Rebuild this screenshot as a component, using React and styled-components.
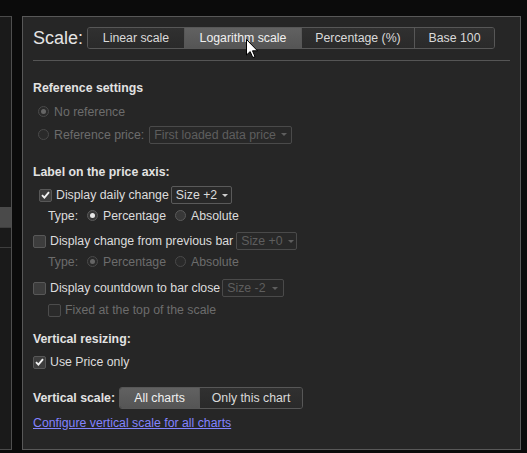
import React from 'react';
import styled, { createGlobalStyle } from 'styled-components';

const Global = createGlobalStyle`
  html, body {
    margin: 0;
    padding: 0;
    background: #0b0b0b;
    font-family: "Liberation Sans", Arial, sans-serif;
    font-size: 12.3px;
    color: #dcdcdc;
  }
`;

const Page = styled.div`
  display: flex;
  gap: 10px;
  padding-top: 16px;
  height: 453px;
  box-sizing: border-box;
  position: relative;
`;

const SideStrip = styled.div`
  width: 12px;
  height: 434px;
  box-sizing: border-box;
  background: #1a1a1a;
  border-top: 1px solid #4a4a4a;
  border-right: 1px solid #4f4f4f;
  border-bottom: 1px solid #4a4a4a;
  display: flex;
  flex-direction: column;
`;

const SideItem = styled.div`
  margin-top: 190px;
  height: 20px;
  background: #4a4a4a;
  border-bottom: 1px solid #3e3e3e;
`;

const SideLine = styled.div`
  margin-top: 19px;
  height: 1px;
  background: #3e3e3e;
`;

const Panel = styled.div`
  width: 499px;
  height: 434px;
  box-sizing: border-box;
  background: #262626;
  border: 1px solid #585858;
  padding: 10px 10px 0 10px;
  display: flex;
  flex-direction: column;
`;

const Header = styled.div`
  display: flex;
  align-items: center;
  gap: 6px;
  height: 22px;
  padding-bottom: 11px;
  border-bottom: 1px solid #555;
`;

const Title = styled.div`
  font-size: 18px;
  color: #e4e4e4;
  width: 48px;
  white-space: nowrap;
`;

const Segments = styled.div`
  display: flex;
  height: 22px;
  box-sizing: border-box;
  border: 1px solid #575757;
  border-radius: 3px;
  overflow: hidden;
`;

const Segment = styled.div`
  display: flex;
  align-items: center;
  justify-content: center;
  width: ${p => p.$w}px;
  box-sizing: border-box;
  color: ${p => (p.$active ? '#f0f0f0' : '#dadada')};
  background: ${p =>
    p.$active
      ? 'linear-gradient(#616161, #555)'
      : 'linear-gradient(#303030, #2a2a2a)'};
  & + & {
    border-left: 1px solid #575757;
  }
`;

const SectionTitle = styled.div`
  font-weight: bold;
  color: #e2e2e2;
  height: 16px;
  line-height: 16px;
  margin-top: ${p => p.$mt}px;
`;

const Row = styled.div`
  display: flex;
  align-items: center;
  height: ${p => p.$h || 22}px;
  margin-top: ${p => p.$mt || 0}px;
  padding-left: ${p => p.$indent || 0}px;
  color: ${p => (p.$disabled ? '#6c6c6c' : '#dcdcdc')};
  white-space: nowrap;
`;

const Label = styled.span`
  margin-right: ${p => p.$mr || 0}px;
`;

const RadioCircle = styled.span`
  width: 11px;
  height: 11px;
  border-radius: 50%;
  box-sizing: border-box;
  border: 1px solid ${p => (p.$disabled ? '#4a4a4a' : '#5a5a5a')};
  background: ${p => (p.$disabled ? '#2a2a2a' : '#383838')};
  display: inline-flex;
  align-items: center;
  justify-content: center;
  margin-right: 5px;
  flex-shrink: 0;
  &::after {
    content: '';
    display: ${p => (p.$checked ? 'block' : 'none')};
    width: 5px;
    height: 5px;
    border-radius: 50%;
    background: ${p => (p.$disabled ? '#666' : '#e8e8e8')};
  }
`;

const Box = styled.span`
  width: 13px;
  height: 13px;
  box-sizing: border-box;
  border-radius: 2px;
  border: 1px solid ${p => (p.$disabled ? '#4c4c4c' : '#585858')};
  background: ${p => (p.$disabled ? '#2a2a2a' : '#3d3d3d')};
  display: inline-flex;
  align-items: center;
  justify-content: center;
  margin-right: 4px;
  flex-shrink: 0;
`;

const Select = styled.span`
  display: inline-flex;
  align-items: center;
  justify-content: space-between;
  box-sizing: border-box;
  height: 18px;
  width: ${p => p.$w}px;
  padding: 0 5px 0 4px;
  margin-left: ${p => p.$ml ?? 3}px;
  border: 1px solid ${p => (p.$disabled ? '#4a4a4a' : '#5a5a5a')};
  border-radius: 2px;
  background: #282828;
  color: ${p => (p.$disabled ? '#5e5e5e' : '#dcdcdc')};
`;

const Caret = styled.span`
  width: 0;
  height: 0;
  border-left: 3px solid transparent;
  border-right: 3px solid transparent;
  border-top: 3px solid ${p => (p.$disabled ? '#5e5e5e' : '#cfcfcf')};
  margin-left: 5px;
`;

const SmallSegments = styled(Segments)`
  margin-left: 4px;
`;

const Link = styled.a`
  color: #8383ff;
  text-decoration: underline;
  cursor: pointer;
`;

const Cursor = styled.svg`
  position: absolute;
  left: 246px;
  top: 39px;
  pointer-events: none;
`;

const Check = () => (
  <svg width="9" height="8" viewBox="0 0 9 8">
    <path d="M1 4.2 L3.4 6.6 L8 1.2" fill="none" stroke="#f2f2f2" strokeWidth="1.9" />
  </svg>
);

const Radio = ({ checked, disabled, children }) => (
  <>
    <RadioCircle $checked={checked} $disabled={disabled} />
    <Label $mr={9}>{children}</Label>
  </>
);

const Checkbox = ({ checked, disabled, children }) => (
  <>
    <Box $disabled={disabled}>{checked && <Check />}</Box>
    <Label>{children}</Label>
  </>
);

const Dropdown = ({ w, ml, disabled, children }) => (
  <Select $w={w} $ml={ml} $disabled={disabled}>
    <span>{children}</span>
    <Caret $disabled={disabled} />
  </Select>
);

export default function App() {
  return (
    <Page>
      <Global />
      <SideStrip>
        <SideItem />
        <SideLine />
      </SideStrip>
      <Panel>
        <Header>
          <Title>Scale:</Title>
          <Segments>
            <Segment $w={96}>Linear scale</Segment>
            <Segment $w={117} $active>Logarithm scale</Segment>
            <Segment $w={113}>Percentage (%)</Segment>
            <Segment $w={80}>Base 100</Segment>
          </Segments>
        </Header>

        <SectionTitle $mt={19}>Reference settings</SectionTitle>
        <Row $h={23} $mt={4} $indent={5} $disabled>
          <Radio checked disabled>No reference</Radio>
        </Row>
        <Row $h={23} $indent={5} $disabled>
          <Radio disabled>Reference price:</Radio>
          <Dropdown w={143} ml={-4} disabled>First loaded data price</Dropdown>
        </Row>

        <SectionTitle $mt={18}>Label on the price axis:</SectionTitle>
        <Row $mt={4} $indent={6}>
          <Checkbox checked>Display daily change</Checkbox>
          <Dropdown w={61} ml={2}>Size +2</Dropdown>
        </Row>
        <Row $h={19} $indent={15}>
          <Label $mr={9}>Type:</Label>
          <Radio checked>Percentage</Radio>
          <Radio>Absolute</Radio>
        </Row>
        <Row $mt={5}>
          <Checkbox>Display change from previous bar</Checkbox>
          <Dropdown w={61} disabled>Size +0</Dropdown>
        </Row>
        <Row $h={19} $indent={15} $disabled>
          <Label $mr={9}>Type:</Label>
          <Radio checked disabled>Percentage</Radio>
          <Radio disabled>Absolute</Radio>
        </Row>
        <Row $mt={6}>
          <Checkbox>Display countdown to bar close</Checkbox>
          <Dropdown w={62} ml={2} disabled>Size -2</Dropdown>
        </Row>
        <Row $indent={15} $disabled>
          <Checkbox disabled>Fixed at the top of the scale</Checkbox>
        </Row>

        <SectionTitle $mt={10}>Vertical resizing:</SectionTitle>
        <Row $mt={4}>
          <Checkbox checked>Use Price only</Checkbox>
        </Row>

        <Row $mt={14}>
          <SectionTitle as="span" $mt={0}>Vertical scale:</SectionTitle>
          <SmallSegments>
            <Segment $w={79} $active>All charts</Segment>
            <Segment $w={103}>Only this chart</Segment>
          </SmallSegments>
        </Row>
        <Row $h={16} $mt={6}>
          <Link>Configure vertical scale for all charts</Link>
        </Row>
      </Panel>
      <Cursor width="13" height="20" viewBox="0 0 13 20">
        <path
          d="M0.5 0.5 L0.5 16 L4.2 12.6 L6.8 18.6 L9 17.6 L6.5 11.8 L11.5 11.8 Z"
          fill="#fff"
          stroke="#000"
          strokeWidth="1"
        />
      </Cursor>
    </Page>
  );
}
